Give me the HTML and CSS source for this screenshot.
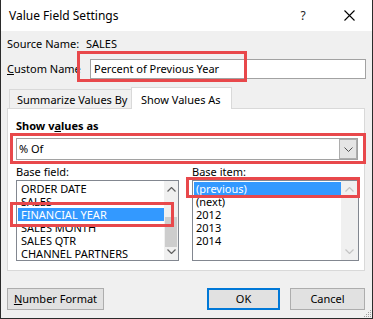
FILE: index.html
```html
<!DOCTYPE html>
<html>
<head>
<meta charset="utf-8">
<link rel="stylesheet" href="styles.css">
</head>
<body>
<div class="dialog">
  <div class="titlebar">
    <span class="title">Value Field Settings</span>
    <span class="tbtn help">?</span>
    <span class="tbtn close">
      <svg width="11" height="11" viewBox="0 0 11 11"><path d="M0.5 0.5 L10.5 10.5 M10.5 0.5 L0.5 10.5" stroke="#000" stroke-width="1.1" fill="none"/></svg>
    </span>
  </div>
  <div class="body">
    <div class="row src">
      <span class="lbl lbl-src">Source Name:</span>
      <span>SALES</span>
    </div>
    <div class="row custom">
      <span class="lbl lbl-custom"><u>C</u>ustom Name</span>
      <div class="textbox">Percent of Previous Year</div>
    </div>
    <div class="tabs">
      <div class="tab">Summarize Values By</div>
      <div class="tab active">Show Values As</div>
    </div>
    <div class="panel">
      <div class="bold">Show v<u>a</u>lues as</div>
      <div class="combo">
        <span class="combo-text">% Of</span>
        <span class="combo-btn">
          <svg width="9" height="5" viewBox="0 0 9 5"><path d="M0.5 0.5 L4.5 4.5 L8.5 0.5" stroke="#505050" stroke-width="1" fill="none"/></svg>
        </span>
      </div>
      <div class="cols">
        <div class="col col1">
          <div class="collbl">Base field:</div>
          <div class="list list1">
            <div class="items">
              <div class="item">ORDER DATE</div>
              <div class="item">SALES</div>
              <div class="item sel">FINANCIAL YEAR</div>
              <div class="item">SALES MONTH</div>
              <div class="item">SALES QTR</div>
              <div class="item">CHANNEL PARTNERS</div>
            </div>
            <div class="sbar sbar1">
              <span class="arrow">
                <svg width="9" height="5" viewBox="0 0 9 5"><path d="M0.5 4.5 L4.5 0.5 L8.5 4.5" stroke="#606060" stroke-width="1.2" fill="none"/></svg>
              </span>
              <span class="track"><span class="thumb"></span></span>
              <span class="arrow">
                <svg width="9" height="5" viewBox="0 0 9 5"><path d="M0.5 0.5 L4.5 4.5 L8.5 0.5" stroke="#606060" stroke-width="1.2" fill="none"/></svg>
              </span>
            </div>
          </div>
        </div>
        <div class="col col2">
          <div class="collbl">Base item:</div>
          <div class="list list2">
            <div class="items">
              <div class="item sel">(previous)</div>
              <div class="item">(next)</div>
              <div class="item">2012</div>
              <div class="item">2013</div>
              <div class="item">2014</div>
            </div>
            <div class="sbar sbar2">
              <span class="arrow">
                <svg width="9" height="5" viewBox="0 0 9 5"><path d="M0.5 4.5 L4.5 0.5 L8.5 4.5" stroke="#c4c4c4" stroke-width="1.2" fill="none"/></svg>
              </span>
              <span class="track"></span>
              <span class="arrow">
                <svg width="9" height="5" viewBox="0 0 9 5"><path d="M0.5 0.5 L4.5 4.5 L8.5 0.5" stroke="#c4c4c4" stroke-width="1.2" fill="none"/></svg>
              </span>
            </div>
          </div>
        </div>
      </div>
    </div>
    <div class="buttons">
      <div class="btn btn-num"><u>N</u>umber Format</div>
      <div class="btn btn-ok">OK</div>
      <div class="btn btn-cancel">Cancel</div>
    </div>
  </div>
  <svg class="grip" width="10" height="10" viewBox="0 0 10 10">
    <rect x="8" y="2" width="1" height="1" fill="#a0a0a0"/>
    <rect x="6" y="4" width="1" height="1" fill="#a0a0a0"/>
    <rect x="8" y="4" width="1" height="1" fill="#a0a0a0"/>
    <rect x="4" y="6" width="1" height="1" fill="#a0a0a0"/>
    <rect x="6" y="6" width="1" height="1" fill="#a0a0a0"/>
    <rect x="8" y="6" width="1" height="1" fill="#a0a0a0"/>
    <rect x="2" y="8" width="1" height="1" fill="#a0a0a0"/>
    <rect x="4" y="8" width="1" height="1" fill="#a0a0a0"/>
    <rect x="6" y="8" width="1" height="1" fill="#a0a0a0"/>
    <rect x="8" y="8" width="1" height="1" fill="#a0a0a0"/>
  </svg>
  <div class="mark mark-custom"></div>
  <div class="mark mark-combo"></div>
  <div class="mark mark-field"></div>
  <div class="mark mark-item"></div>
</div>
</body>
</html>
```
FILE: styles.css
```css
html, body {
  margin: 0;
  padding: 0;
  background: #ffffff;
}

.dialog {
  position: relative;
  width: 373px;
  height: 319px;
  box-sizing: border-box;
  border: 1px solid #2b2b2b;
  border-top: none;
  background: #f0f0f0;
  font-family: "Noto Sans", sans-serif;
  font-size: 11px;
  color: #000;
  display: flex;
  flex-direction: column;
  overflow: hidden;
}

u {
  text-decoration: underline;
  text-underline-offset: 1px;
}

.titlebar {
  height: 31px;
  flex: none;
  background: #fff;
  display: flex;
  align-items: center;
  padding-left: 8px;
}

.title {
  font-size: 12px;
  line-height: 14px;
  flex: 1;
}

.tbtn {
  width: 46px;
  height: 31px;
  display: flex;
  align-items: center;
  justify-content: center;
}

.help {
  font-size: 12px;
  color: #222;
}

.body {
  flex: 1;
  display: flex;
  flex-direction: column;
  padding: 6px 6px 0 6px;
}

.row {
  display: flex;
  align-items: center;
}

.src {
  height: 14px;
  line-height: 14px;
}

.lbl-src {
  width: 79px;
}

.custom {
  margin-top: 8px;
  height: 20px;
}

.lbl-custom {
  width: 83px;
  line-height: 14px;
}

.textbox {
  width: 276px;
  height: 20px;
  box-sizing: border-box;
  border: 1px solid #a2a2a2;
  background: #fff;
  padding-left: 3px;
  line-height: 18px;
}

.tabs {
  margin-top: 8px;
  height: 21px;
  display: flex;
  align-items: flex-start;
  padding-left: 2px;
}

.tab {
  box-sizing: border-box;
  border: 1px solid #d9d9d9;
  border-bottom: none;
  line-height: 14px;
}

.tab:first-child {
  margin-top: 2px;
  width: 122px;
  height: 19px;
  padding: 3px 0 0 7px;
  background: #f0f0f0;
  border-right: none;
}

.tab.active {
  position: relative;
  z-index: 1;
  width: 101px;
  height: 22px;
  padding: 5px 0 0 9px;
  background: #fff;
}

.panel {
  width: 358px;
  height: 163px;
  box-sizing: border-box;
  border: 1px solid #d9d9d9;
  background: #fff;
  padding: 10px 0 0 8px;
}

.bold {
  font-weight: 700;
  line-height: 14px;
  height: 14px;
}

.combo {
  margin-top: 5px;
  width: 342px;
  height: 22px;
  box-sizing: border-box;
  border: 1px solid #a2a2a2;
  display: flex;
  align-items: center;
  background: #fff;
}

.combo-text {
  flex: 1;
  padding-left: 2px;
  line-height: 14px;
}

.combo-btn {
  width: 18px;
  height: 20px;
  box-sizing: border-box;
  border: 1px solid #adadad;
  background: #e5e5e5;
  display: flex;
  align-items: center;
  justify-content: center;
}

.cols {
  display: flex;
  gap: 13px;
  margin-top: 5px;
}

.collbl {
  line-height: 14px;
  height: 14px;
  margin-bottom: 1px;
}

.list {
  height: 81px;
  box-sizing: border-box;
  border: 1px solid #828790;
  display: flex;
  background: #fff;
  overflow: hidden;
}

.list1 {
  width: 163px;
}

.list2 {
  width: 167px;
}

.items {
  flex: 1;
  padding: 1px 0 0 1px;
  overflow: hidden;
}

.item {
  height: 13px;
  line-height: 13px;
  padding-left: 3px;
  white-space: nowrap;
}

.list2 .item {
  padding-left: 2px;
}

.item.sel {
  background: #3399ff;
  color: #fff;
}

.sbar {
  background: #f0f0f0;
  display: flex;
  flex-direction: column;
}

.sbar1 {
  width: 14px;
}

.sbar2 {
  width: 17px;
}

.arrow {
  height: 17px;
  display: flex;
  align-items: center;
  justify-content: center;
  flex: none;
}

.track {
  flex: 1;
  position: relative;
}

.thumb {
  position: absolute;
  left: 1px;
  right: 1px;
  top: 19px;
  height: 30px;
  background: #cdcdcd;
}

.buttons {
  margin-top: 17px;
  display: flex;
  align-items: flex-start;
}

.btn {
  height: 22px;
  box-sizing: border-box;
  border: 1px solid #adadad;
  background: #e1e1e1;
  display: flex;
  align-items: center;
  justify-content: center;
  line-height: 14px;
}

.btn-num {
  width: 97px;
}

.btn-ok {
  margin-left: auto;
  width: 73px;
  border: 2px solid #0078d7;
}

.btn-cancel {
  margin-left: 10px;
  margin-right: 1px;
  width: 75px;
}

.grip {
  position: absolute;
  right: 0;
  bottom: 0;
}

.mark {
  position: absolute;
  box-sizing: border-box;
  border: 3px solid #e8484b;
}

.mark-custom {
  left: 76px;
  top: 51px;
  width: 170px;
  height: 31px;
}

.mark-combo {
  left: 9px;
  top: 133px;
  width: 356px;
  height: 31px;
}

.mark-field {
  left: 9px;
  top: 202px;
  width: 164px;
  height: 25px;
}

.mark-item {
  left: 185px;
  top: 177px;
  width: 174px;
  height: 21px;
}
```
